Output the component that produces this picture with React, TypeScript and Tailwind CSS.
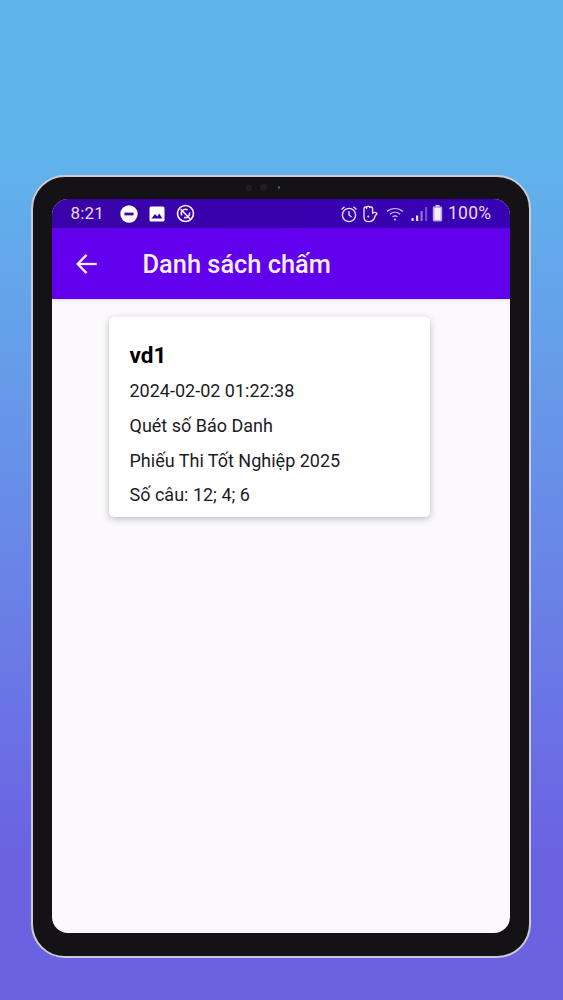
import React from "react";

const font = { fontFamily: "Roboto, sans-serif" };

function StatusLeft() {
  return (
    <div className="flex items-center">
      <span className="text-[17px] leading-none text-[#e6dcf8] tracking-[0.2px] w-[36px]">8:21</span>
      <svg className="ml-[13px]" width="18" height="18" viewBox="0 0 17 17">
        <circle cx="8.5" cy="8.5" r="8.2" fill="#fff" />
        <rect x="4.2" y="7.2" width="8.6" height="2.6" fill="#3a02a8" />
      </svg>
      <svg className="ml-[11px]" width="16" height="16" viewBox="0 0 16 16">
        <rect x="0.5" y="0.5" width="15" height="15" rx="1.5" fill="#fff" />
        <path d="M2.5 12.5 L6 8 L8.3 10.4 L10.2 7.5 L13.5 12.5 Z" fill="#3a02a8" />
      </svg>
      <svg className="ml-[11px]" width="19" height="19" viewBox="0 0 19 19" fill="none" stroke="#f1ebfb">
        <circle cx="9.5" cy="9.5" r="8" strokeWidth="1.7" />
        <path d="M5.8 11.5 A4.2 4.2 0 0 1 11.6 5.9 M13.5 8.5 A4.2 4.2 0 0 1 8 13.4" strokeWidth="1.6" />
        <path d="M4.8 5.4 L14.2 15" strokeWidth="1.6" />
      </svg>
    </div>
  );
}

function StatusRight() {
  return (
    <div className="flex items-center">
      <svg width="18" height="18" viewBox="0 0 18 18" fill="none" stroke="#e6dcf8" strokeWidth="1.4">
        <circle cx="9" cy="10" r="6.6" />
        <path d="M9 6 V10 L11.6 12" />
        <path d="M1.5 4.5 L4.5 1.8 M16.5 4.5 L13.5 1.8" />
      </svg>
      <svg className="ml-[4px]" width="16" height="18" viewBox="0 0 16 18" fill="none" stroke="#e6dcf8" strokeWidth="1.4" strokeLinejoin="round">
        <path d="M2 9 V3.5 C2 1.5 4.6 1.5 4.6 3.5 V2.5 C4.6 0.8 7.8 0.8 7.8 2.5 C7.8 1.6 10.6 1.6 10.6 3.5 V8.5 C11.2 7 14.6 7 15 8.8 C13.4 9.6 13 11 12.4 13 C11.6 15.6 9.4 16.6 6.6 16.6 C3.8 16.6 2 14.8 2 12 Z" />
        <circle cx="6.3" cy="11.5" r="1" fill="#e6dcf8" stroke="none" />
      </svg>
      <svg className="ml-[8px]" width="18" height="16" viewBox="0 0 18 16" fill="none" stroke="#cdbcf0" strokeWidth="1.2">
        <path d="M1 5.5 C5.5 1.5 12.5 1.5 17 5.5" />
        <path d="M3.8 8.2 C6.8 5.6 11.2 5.6 14.2 8.2" />
        <path d="M6.5 10.8 C8 9.6 10 9.6 11.5 10.8" />
        <circle cx="9" cy="13.6" r="1" fill="#e6dcf8" stroke="none" />
      </svg>
      <svg className="ml-[7px]" width="18" height="16" viewBox="0 0 18 16">
        <rect x="0.5" y="12" width="2.2" height="3" fill="#e6dcf8" />
        <rect x="5" y="9.5" width="2.2" height="5.5" fill="#e6dcf8" />
        <rect x="9.5" y="5" width="2.2" height="10" fill="#8f75d6" />
        <rect x="14" y="1" width="2.2" height="14" fill="#6f4fc8" />
      </svg>
      <svg className="ml-[3px]" width="11" height="17" viewBox="0 0 11 17">
        <rect x="3.5" y="0" width="4" height="2" fill="#d9cdf3" />
        <rect x="0.8" y="1.5" width="9.4" height="15" rx="1.4" fill="#b9a6e8" />
        <rect x="2.4" y="3" width="6.2" height="12" fill="#f3effb" />
      </svg>
      <span className="ml-[5px] text-[17.5px] leading-none text-[#e6dcf8] tracking-[0.3px]">100%</span>
    </div>
  );
}

export default function App() {
  return (
    <div
      style={font}
      className="w-[563px] h-[1000px] overflow-hidden flex justify-center items-start pt-[175px] bg-gradient-to-b from-[#60b4ec] from-[15%] to-[#6b62e2] to-[85%]"
    >
      <div className="w-[500px] h-[783px] ml-[-2px] rounded-[34px] bg-[#141214] border-2 border-[#c9cbd6] flex flex-col items-stretch px-[19px] pt-[22px] pb-[23px] relative">
        <div className="absolute top-[7px] left-[213px] flex items-center">
          <span className="w-[6px] h-[6px] rounded-full bg-[#1f1f22]" />
          <span className="ml-[8px] w-[7px] h-[7px] rounded-full bg-[#1f1f22]" />
          <span className="ml-[11px] w-[2px] h-[3px] rounded-full bg-[#2b5f8a]" />
        </div>
        <div className="flex-1 rounded-[16px] overflow-hidden bg-[#fbf9fc] flex flex-col">
          <div className="h-[29px] shrink-0 bg-gradient-to-r from-[#3a02a8] to-[#3700b3] flex items-center justify-between pl-[19px] pr-[18px]">
            <StatusLeft />
            <StatusRight />
          </div>
          <div className="h-[71px] shrink-0 bg-[#6200ee] flex items-center pl-[22px] text-[#f5eefd] shadow-sm">
            <svg width="26" height="26" viewBox="0 0 24 24" fill="none" stroke="#f5eefd" strokeWidth="2.1" strokeLinecap="butt" strokeLinejoin="miter">
              <path d="M21 12 H3.8" />
              <path d="M11.6 3.6 L3.4 12 L11.6 20.4" />
            </svg>
            <span className="ml-[43px] mt-[2px] text-[25.4px] font-medium leading-none">Danh sách chấm</span>
          </div>
          <div className="flex-1 pt-[18px] pl-[57px]">
            <div className="w-[321px] h-[200px] bg-white rounded-[5px] shadow-[0_2px_7px_rgba(40,30,60,0.28)] pl-[21px] pt-[25px] text-[#1c1b1f] flex flex-col">
              <div className="text-[22.5px] font-bold leading-[26px] text-black">vd1</div>
              <div className="mt-[11px] text-[18px] leading-[24px]">2024-02-02 01:22:38</div>
              <div className="mt-[10.5px] text-[18px] leading-[24px]">Quét số Báo Danh</div>
              <div className="mt-[11px] text-[18px] leading-[24px]">Phiếu Thi Tốt Nghiệp 2025</div>
              <div className="mt-[10.5px] text-[18px] leading-[24px]">Số câu: 12; 4; 6</div>
            </div>
          </div>
        </div>
      </div>
    </div>
  );
}
